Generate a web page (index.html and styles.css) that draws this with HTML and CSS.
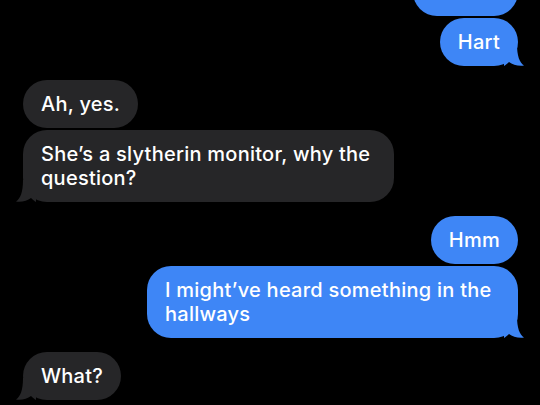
FILE: index.html
```html
<!DOCTYPE html>
<html lang="en">
<head>
<meta charset="utf-8">
<link rel="stylesheet" href="styles.css">
</head>
<body>
<div class="chat">
  <div class="msg out first"><div class="bubble">Hmmm</div></div>
  <div class="msg out same"><div class="bubble tail">Hart<svg class="tip" viewBox="0 0 20 22"><path d="M0 0H13C13 12 15.5 18.5 20 21.6C14 22.4 8.5 20.6 5 18C3.2 19.8 1.6 21 0 22Z"/></svg></div></div>
  <div class="msg in">  <div class="bubble">Ah, yes.</div></div>
  <div class="msg in same"><div class="bubble tail">She’s a slytherin monitor, why the question?<svg class="tip" viewBox="0 0 20 22"><path d="M0 0H13C13 12 15.5 18.5 20 21.6C14 22.4 8.5 20.6 5 18C3.2 19.8 1.6 21 0 22Z"/></svg></div></div>
  <div class="msg out"><div class="bubble">Hmm</div></div>
  <div class="msg out same"><div class="bubble tail">I might’ve heard something in the hallways<svg class="tip" viewBox="0 0 20 22"><path d="M0 0H13C13 12 15.5 18.5 20 21.6C14 22.4 8.5 20.6 5 18C3.2 19.8 1.6 21 0 22Z"/></svg></div></div>
  <div class="msg in"><div class="bubble tail">What?<svg class="tip" viewBox="0 0 20 22"><path d="M0 0H13C13 12 15.5 18.5 20 21.6C14 22.4 8.5 20.6 5 18C3.2 19.8 1.6 21 0 22Z"/></svg></div></div>
</div>
</body>
</html>
```
FILE: styles.css
```css
html, body {
  margin: 0;
  padding: 0;
  background: #000;
  height: 100%;
  overflow: hidden;
}
.chat {
  display: flex;
  flex-direction: column;
  padding: 0 22px 0 23px;
  font-family: Inter, "Liberation Sans", sans-serif;
  font-size: 20px;
  font-weight: 500;
  letter-spacing: 0.25px;
  line-height: 24px;
  color: #fff;
}
.msg {
  display: flex;
  margin-top: 14px;
}
.msg.same { margin-top: 2px; }
.msg.first { margin-top: -32px; }
.msg.out { justify-content: flex-end; }
.msg.in { justify-content: flex-start; }
.bubble {
  position: relative;
  max-width: 335px;
  padding: 12px 18px;
  border-radius: 24px;
}
.out .bubble { background: #3e86f6; }
.in .bubble { background: #262628; }
.tip {
  position: absolute;
  bottom: 0;
  width: 20px;
  height: 22px;
}
.out .tip { right: -6px; fill: #3e86f6; }
.in .tip { left: -7px; fill: #262628; transform: scaleX(-1); }
```
